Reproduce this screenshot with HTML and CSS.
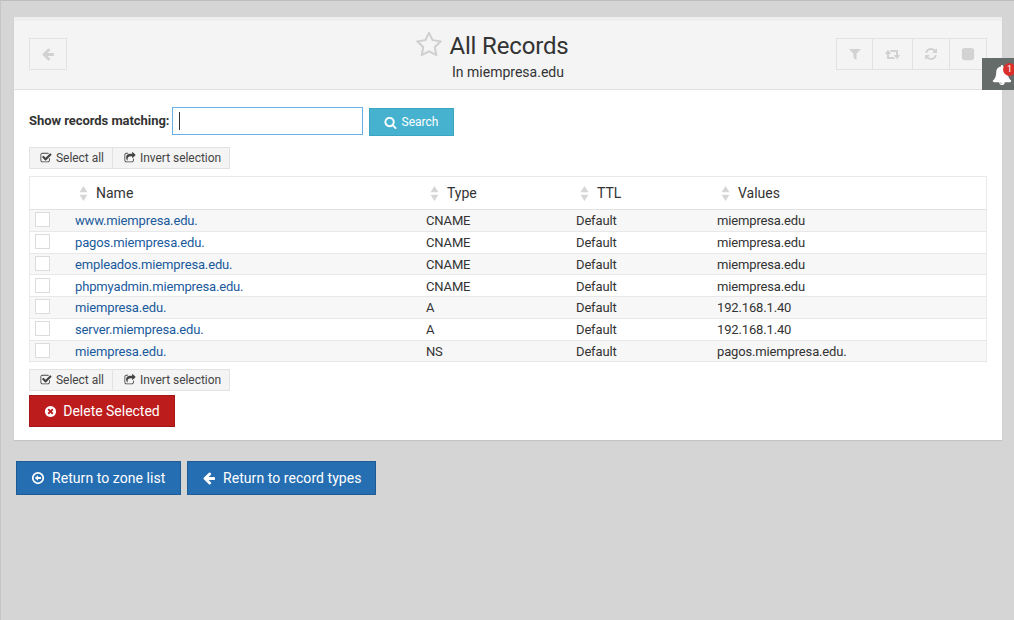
FILE: index.html
```html
<!DOCTYPE html>
<html lang="es">
<head>
  <meta charset="UTF-8">
  <title>All Records</title>
  <link rel="stylesheet" href="styles.css">
</head>
<body>

  <svg class="sprite" xmlns="http://www.w3.org/2000/svg">
    <symbol id="i-arrow-left" viewBox="0 0 1792 1792"><path d="M1664 896v128q0 53-32.5 90.5t-84.5 37.5h-704l293 294q38 36 38 90t-38 90l-75 76q-37 37-90 37-52 0-91-37l-651-652q-37-37-37-90 0-52 37-91l651-650q38-38 91-38 52 0 90 38l75 74q38 38 38 91t-38 91l-293 293h704q52 0 84.5 37.5t32.5 90.5z"/></symbol>
    <symbol id="i-star" viewBox="0 0 1792 1792"><path d="M1201 1004l306-297-422-62-189-382-189 382-422 62 306 297-73 421 378-199 377 199zm527-357q0 22-26 48l-363 354 86 500q1 7 1 20 0 50-41 50-19 0-40-12l-449-236-449 236q-22 12-40 12-21 0-31.5-14.5t-10.5-35.5q0-6 2-20l86-500-364-354q-25-27-25-48 0-37 56-46l502-73 225-455q19-41 49-41t49 41l225 455 502 73q56 9 56 46z"/></symbol>
    <symbol id="i-filter" viewBox="0 0 1792 1792"><path d="M1595 295q17 41-14 70l-493 493v742q0 42-39 59-13 5-25 5-27 0-45-19l-256-256q-19-19-19-45v-486l-493-493q-31-29-14-70 17-39 59-39h1280q42 0 59 39z"/></symbol>
    <symbol id="i-retweet" viewBox="0 0 1920 1792"><path d="M1216 1504q0 13-9.5 22.5t-22.5 9.5h-960q-8 0-13.5-2t-9-7-5.5-8-3-11.5-1-11.5v-600h-192q-26 0-45-19t-19-45q0-24 15-41l320-384q19-22 49-22t49 22l320 384q15 17 15 41 0 26-19 45t-45 19h-192v384h576q16 0 25 11l160 192q7 10 7 21zm640-416q0 24-15 41l-320 384q-20 23-49 23t-49-23l-320-384q-15-17-15-41 0-26 19-45t45-19h192v-384h-576q-16 0-25-12l-160-192q-7-9-7-20 0-13 9.5-22.5t22.5-9.5h960q8 0 13.5 2t9 7 5.5 8 3 11.5 1 11.5v600h192q26 0 45 19t19 45z"/></symbol>
    <symbol id="i-refresh" viewBox="0 0 1792 1792"><path d="M1639 1056q0 5-1 7-64 268-268 434.5t-478 166.5q-146 0-282.5-55t-243.5-157l-129 129q-19 19-45 19t-45-19-19-45v-448q0-26 19-45t45-19h448q26 0 45 19t19 45-19 45l-137 137q71 66 161 102t187 36q134 0 250-65t186-179q11-17 53-117 8-23 30-23h192q13 0 22.5 9.5t9.5 22.5zm25-800v448q0 26-19 45t-45 19h-448q-26 0-45-19t-19-45 19-45l138-138q-148-137-349-137-134 0-250 65t-186 179q-11 17-53 117-8 23-30 23h-199q-13 0-22.5-9.5t-9.5-22.5v-7q65-268 270-434.5t480-166.5q146 0 284 55.5t245 156.5l130-129q19-19 45-19t45 19 19 45z"/></symbol>
    <symbol id="i-stop" viewBox="0 0 16 16"><rect x="1" y="1" width="14" height="14" rx="3"/></symbol>
    <symbol id="i-bell" viewBox="0 0 1792 1792"><path d="M912 1696q0-16-16-16-59 0-101.5-42.5t-42.5-101.5q0-16-16-16t-16 16q0 73 51.5 124.5t124.5 51.5q16 0 16-16zm816-288q0 52-38 90t-90 38h-448q0 106-75 181t-181 75-181-75-75-181h-448q-52 0-90-38t-38-90q50-42 91-88t85-119.5 74.5-158.5 50-206 19.5-260q0-152 117-282.5t307-158.5q-8-19-8-39 0-40 28-68t68-28 68 28 28 68q0 20-8 39 190 28 307 158.5t117 282.5q0 139 19.5 260t50 206 74.5 158.5 85 119.5 91 88z"/></symbol>
    <symbol id="i-search" viewBox="0 0 1792 1792"><path d="M1216 832q0-185-131.5-316.5t-316.5-131.5-316.5 131.5-131.5 316.5 131.5 316.5 316.5 131.5 316.5-131.5 131.5-316.5zm512 832q0 52-38 90t-90 38q-54 0-90-38l-343-342q-179 124-399 124-143 0-273.5-55.5t-225-150-150-225-55.5-273.5 55.5-273.5 150-225 225-150 273.5-55.5 273.5 55.5 225 150 150 225 55.5 273.5q0 220-124 399l343 343q37 37 37 90z"/></symbol>
    <symbol id="i-check" viewBox="0 0 1792 1792"><path d="M1472 930v318q0 119-84.5 203.5t-203.5 84.5h-832q-119 0-203.5-84.5t-84.5-203.5v-832q0-119 84.5-203.5t203.5-84.5h832q63 0 117 25 15 7 18 23 3 17-9 29l-49 49q-10 10-23 10-3 0-9-2-23-6-45-6h-832q-66 0-113 47t-47 113v832q0 66 47 113t113 47h832q66 0 113-47t47-113v-254q0-13 9-22l64-64q10-10 23-10 6 0 12 3 20 8 20 29zm231-489l-814 814q-24 24-57 24t-57-24l-430-430q-24-24-24-57t24-57l110-110q24-24 57-24t57 24l263 263 647-647q24-24 57-24t57 24l110 110q24 24 24 57t-24 57z"/></symbol>
    <symbol id="i-share" viewBox="0 0 1792 1792"><path d="M1472 989v259q0 119-84.5 203.5t-203.5 84.5h-832q-119 0-203.5-84.5t-84.5-203.5v-832q0-119 84.5-203.5t203.5-84.5h255q13 0 22.5 9.5t9.5 22.5q0 27-26 32-77 26-133 60-10 4-16 4h-112q-66 0-113 47t-47 113v832q0 66 47 113t113 47h832q66 0 113-47t47-113v-214q0-19 18-29 28-13 54-37 16-16 35-8 21 9 21 29zm237-496l-384 384q-18 19-45 19-12 0-25-5-39-17-39-59v-192h-160q-323 0-438 131-119 137-74 473 3 23-20 34-8 2-12 2-16 0-26-13-10-14-21-31t-39.5-68.5-49.5-99.5-38.5-114-17.5-122q0-49 3.5-91t14-90 28-88 47-81.5 68.5-74 94.5-61.5 124.5-48.5 159.5-30.5 196.5-11h160v-192q0-42 39-59 13-5 25-5 26 0 45 19l384 384q19 19 19 45t-19 45z"/></symbol>
    <symbol id="i-times" viewBox="0 0 1792 1792"><path d="M1277 1122q0-26-19-45l-181-181 181-181q19-19 19-45 0-27-19-46l-90-90q-19-19-46-19-26 0-45 19l-181 181-181-181q-19-19-45-19-27 0-46 19l-90 90q-19 19-19 46 0 26 19 45l181 181-181 181q-19 19-19 45 0 27 19 46l90 90q19 19 46 19 26 0 45-19l181-181 181 181q19 19 45 19 27 0 46-19l90-90q19-19 19-46zm387-226q0 209-103 385.5t-279.5 279.5-385.5 103-385.5-103-279.5-279.5-103-385.5 103-385.5 279.5-279.5 385.5-103 385.5 103 279.5 279.5 103 385.5z"/></symbol>
    <symbol id="i-circle-left" viewBox="0 0 16 16"><path fill-rule="evenodd" d="M8 1a7 7 0 1 1 0 14A7 7 0 0 1 8 1zm0 2a5 5 0 1 0 0 10A5 5 0 0 0 8 3z"/><path d="M4.4 8 8 4.9v2h3.4v2.2H8v2z"/></symbol>
    <symbol id="i-sort" viewBox="0 0 9 17"><path d="M4.5 0 9 7H0zM4.5 17 0 10h9z"/></symbol>
  </svg>

  <div class="page">
    <div class="panel">
      <div class="panel-head">
        <a class="tool-btn back-btn"><svg class="icon"><use href="#i-arrow-left"/></svg></a>
        <div class="title-block">
          <h1 class="title"><svg class="star"><use href="#i-star"/></svg>All Records</h1>
          <div class="subtitle">In miempresa.edu</div>
        </div>
        <div class="tool-group">
          <a class="tool-btn w-filter"><svg class="icon"><use href="#i-filter"/></svg></a>
          <a class="tool-btn w-retweet"><svg class="icon icon-wide"><use href="#i-retweet"/></svg></a>
          <a class="tool-btn w-refresh"><svg class="icon"><use href="#i-refresh"/></svg></a>
          <a class="tool-btn w-stop"><svg class="icon"><use href="#i-stop"/></svg></a>
        </div>
      </div>

      <div class="panel-body">
        <form class="search-row">
          <label class="search-label">Show records matching:</label>
          <div class="search-input"><span class="caret"></span></div>
          <button type="button" class="search-btn"><svg class="btn-icon"><use href="#i-search"/></svg>Search</button>
        </form>

        <div class="select-links">
          <a class="select-link link-all"><svg class="link-icon"><use href="#i-check"/></svg>Select all</a>
          <a class="select-link link-invert"><svg class="link-icon"><use href="#i-share"/></svg>Invert selection</a>
        </div>

        <table class="records">
          <colgroup>
            <col class="col-check"><col class="col-name"><col class="col-type"><col class="col-ttl"><col class="col-values">
          </colgroup>
          <thead>
            <tr>
              <th></th>
              <th class="th-name"><svg class="sort"><use href="#i-sort"/></svg>Name</th>
              <th><svg class="sort"><use href="#i-sort"/></svg>Type</th>
              <th><svg class="sort"><use href="#i-sort"/></svg>TTL</th>
              <th><svg class="sort"><use href="#i-sort"/></svg>Values</th>
            </tr>
          </thead>
          <tbody>
            <tr><td><span class="check"></span></td><td><a class="rec-link">www.miempresa.edu.</a></td><td>CNAME</td><td>Default</td><td>miempresa.edu</td></tr>
            <tr><td><span class="check"></span></td><td><a class="rec-link">pagos.miempresa.edu.</a></td><td>CNAME</td><td>Default</td><td>miempresa.edu</td></tr>
            <tr><td><span class="check"></span></td><td><a class="rec-link">empleados.miempresa.edu.</a></td><td>CNAME</td><td>Default</td><td>miempresa.edu</td></tr>
            <tr><td><span class="check"></span></td><td><a class="rec-link">phpmyadmin.miempresa.edu.</a></td><td>CNAME</td><td>Default</td><td>miempresa.edu</td></tr>
            <tr><td><span class="check"></span></td><td><a class="rec-link">miempresa.edu.</a></td><td>A</td><td>Default</td><td>192.168.1.40</td></tr>
            <tr><td><span class="check"></span></td><td><a class="rec-link">server.miempresa.edu.</a></td><td>A</td><td>Default</td><td>192.168.1.40</td></tr>
            <tr><td><span class="check"></span></td><td><a class="rec-link">miempresa.edu.</a></td><td>NS</td><td>Default</td><td>pagos.miempresa.edu.</td></tr>
          </tbody>
        </table>

        <div class="select-links bottom">
          <a class="select-link link-all"><svg class="link-icon"><use href="#i-check"/></svg>Select all</a>
          <a class="select-link link-invert"><svg class="link-icon"><use href="#i-share"/></svg>Invert selection</a>
        </div>

        <button type="button" class="delete-btn"><svg class="btn-icon"><use href="#i-times"/></svg>Delete Selected</button>
      </div>
    </div>

    <div class="return-row">
      <a class="return-btn zone"><svg class="btn-icon"><use href="#i-circle-left"/></svg>Return to zone list</a>
      <a class="return-btn types"><svg class="btn-icon"><use href="#i-arrow-left"/></svg>Return to record types</a>
    </div>
  </div>

  <!-- notification tab -->
  <div class="bell-tab">
    <svg class="bell"><use href="#i-bell"/></svg>
    <span class="bell-badge">1</span>
  </div>

</body>
</html>
```

FILE: styles.css
```css
html, body {
  height: 100%;
}

body {
  margin: 0;
  background: #d5d5d5;
  border-top: 1px solid #bdbdbd;
  border-left: 1px solid #c6c6c6;
  box-sizing: border-box;
  font-family: Roboto, "Liberation Sans", sans-serif;
  font-size: 13px;
  color: #333;
  overflow: hidden;
}

.sprite {
  display: none;
}

.page {
  padding: 16px 12px 0 13px;
}

.panel {
  background: #fff;
  box-shadow: 0 1px 1px rgba(0,0,0,0.08);
}

.panel-head {
  display: flex;
  align-items: flex-start;
  justify-content: space-between;
  height: 68px;
  padding: 0 15px;
  background: #f4f4f4;
  border-top: 4px solid #eeeeee;
  border-bottom: 1px solid #e2e2e2;
  position: relative;
}

.tool-btn {
  display: flex;
  align-items: center;
  justify-content: center;
  box-sizing: border-box;
  height: 32px;
  border: 1px solid #e2e2e2;
  color: #d2d2d2;
  margin-top: 17px;
}

.back-btn {
  width: 38px;
}

.tool-group {
  display: flex;
}

.tool-group .tool-btn + .tool-btn {
  margin-left: -1px;
}

.w-filter { width: 37px; }
.w-retweet { width: 41px; }
.w-refresh { width: 38px; }
.w-stop { width: 38px; }

.icon {
  width: 14px;
  height: 14px;
  fill: currentColor;
}

.icon-wide {
  width: 16px;
}

.title-block {
  text-align: center;
  position: absolute;
  left: 0;
  right: 0;
  top: 0;
}

.title {
  margin: 8px 0 0;
  font-size: 24px;
  font-weight: 400;
  line-height: 34px;
  letter-spacing: -0.15px;
  color: #333;
}

.star {
  width: 28px;
  height: 28px;
  margin: 0 6px -5px -32px;
  fill: #cfcfcf;
}

.subtitle {
  font-size: 14px;
  line-height: 20px;
  margin-top: -1px;
}

.panel-body {
  padding: 17px 15px 13px;
}

.search-row {
  display: flex;
  align-items: flex-start;
  margin: 0;
}

.search-label {
  align-self: center;
  font-weight: 700;
  margin: 0 3px 2px 0;
  letter-spacing: -0.05px;
}

.search-input {
  display: flex;
  align-items: center;
  box-sizing: border-box;
  width: 191px;
  height: 28px;
  padding-left: 6px;
  background: #fff;
  border: 1px solid #66afe9;
}

.caret {
  width: 1px;
  height: 18px;
  background: #333;
}

.search-btn {
  display: flex;
  align-items: center;
  justify-content: center;
  box-sizing: border-box;
  width: 85px;
  height: 28px;
  margin: 1px 0 0 6px;
  padding: 0 2px 0 0;
  background: #46b2d0;
  border: 1px solid #3ba5c2;
  border-radius: 0;
  color: #fff;
  font: 12px Roboto, "Liberation Sans", sans-serif;
}

.btn-icon {
  width: 13px;
  height: 13px;
  margin-right: 5px;
  fill: currentColor;
}

.select-links {
  display: flex;
  margin-top: 11px;
  height: 22px;
}

.select-links.bottom {
  margin-top: 7px;
}

.select-link {
  display: flex;
  align-items: center;
  box-sizing: border-box;
  background: #f4f4f4;
  border: 1px solid #e2e2e2;
  color: #444;
  font-size: 12px;
  letter-spacing: -0.04px;
}

.link-all {
  width: 84px;
  padding-left: 10px;
}

.link-invert {
  width: 118px;
  margin-left: -1px;
  padding-left: 11px;
}

.link-icon {
  width: 12px;
  height: 12px;
  margin-right: 4px;
  fill: #444;
}

.records {
  width: 100%;
  margin-top: 7px;
  border-collapse: collapse;
  table-layout: fixed;
  border: 1px solid #eaeaea;
}

.col-check { width: 40px; }
.col-name { width: 351px; }
.col-type { width: 150px; }
.col-ttl { width: 141px; }

.records th {
  height: 33px;
  padding: 0 0 0 9.5px;
  font-size: 14px;
  font-weight: 400;
  text-align: left;
  color: #333;
  border-bottom: 1px solid #e2e2e2;
  box-sizing: border-box;
}

.sort {
  width: 9px;
  height: 15px;
  margin-right: 8px;
  vertical-align: -3px;
  fill: #d6d6d6;
}

.records td {
  height: 21.75px;
  padding: 2px 0 0 5.5px;
  line-height: 16px;
  letter-spacing: -0.15px;
  border-bottom: 1px solid #e8e8e8;
  box-sizing: border-box;
}

.records tbody tr:nth-child(odd) {
  background: #f7f7f7;
}

.rec-link {
  color: #1a5a9c;
}

.check {
  display: block;
  box-sizing: border-box;
  width: 15px;
  height: 15px;
  margin: -3px 0 0 -1px;
  background: #fff;
  border: 1px solid #dcdcdc;
}

.delete-btn {
  display: flex;
  align-items: center;
  justify-content: center;
  box-sizing: border-box;
  width: 146px;
  height: 32px;
  margin-top: 4px;
  padding: 0;
  background: #bd1c1c;
  border: 1px solid #a51818;
  border-radius: 0;
  color: #fff;
  font: 14px Roboto, "Liberation Sans", sans-serif;
  letter-spacing: -0.02px;
}

.delete-btn .btn-icon {
  margin-right: 6px;
}

.return-row {
  display: flex;
  gap: 6px;
  margin: 21px 0 0 2px;
}

.return-btn {
  display: flex;
  align-items: center;
  box-sizing: border-box;
  height: 34px;
  padding-left: 14px;
  background: #256eb2;
  border: 1px solid #1f5a93;
  color: #fff;
  font-size: 14px;
  letter-spacing: 0.06px;
}

.return-btn .btn-icon {
  width: 14px;
  height: 14px;
  margin-right: 7px;
}

.zone { width: 165px; }
.types { width: 189px; }

.bell-tab {
  position: absolute;
  top: 58px;
  right: 0;
  width: 32px;
  height: 32px;
  background: #666c6a;
}

.bell {
  position: absolute;
  left: 10px;
  top: 7px;
  width: 20px;
  height: 20px;
  fill: #fff;
}

.bell-badge {
  position: absolute;
  left: 21px;
  top: 5px;
  width: 13px;
  height: 13px;
  border-radius: 50%;
  background: #d9302c;
  color: #fff;
  font-size: 9px;
  line-height: 13px;
  text-align: center;
}
```
